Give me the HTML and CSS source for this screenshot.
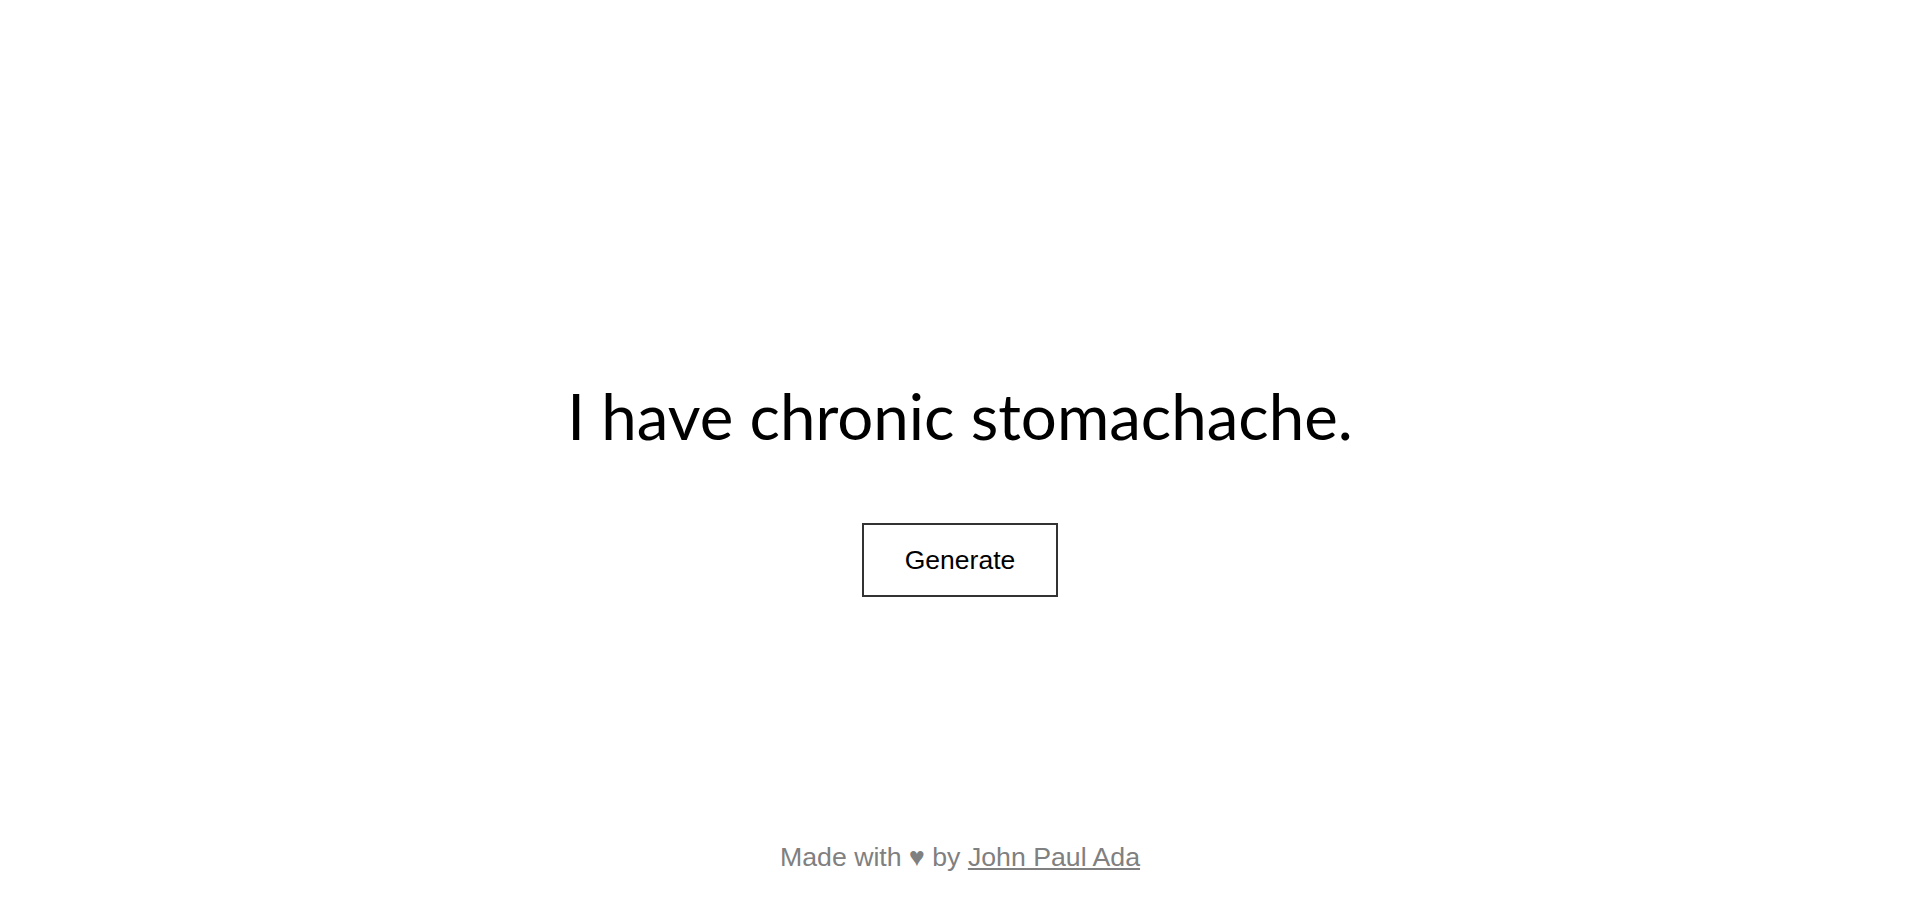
FILE: index.html
```html
<!DOCTYPE html>
<html lang="en">
<head>
<meta charset="utf-8">
<title>Excuse Generator</title>
<link rel="stylesheet" href="styles.css">
</head>
<body>
<main class="main">
  <h1 class="excuse">I have chronic stomachache.</h1>
  <button class="generate" type="button">Generate</button>
</main>
<footer class="footer">Made with ♥ by <a class="author" href="#">John Paul Ada</a></footer>
</body>
</html>
```
FILE: styles.css
```css
html, body {
  margin: 0;
  padding: 0;
  background: #fff;
}
body {
  display: flex;
  flex-direction: column;
  min-height: 100vh;
  font-family: "Liberation Sans", Arial, sans-serif;
}
.main {
  flex: 1;
  display: flex;
  flex-direction: column;
  align-items: center;
  padding-top: 378px;
}
.excuse {
  margin: 0 0 69px 0;
  font-family: Lato, "Open Sans", sans-serif;
  font-weight: 400;
  font-size: 63.6px;
  line-height: 1.2;
  color: #000;
  white-space: nowrap;
}
.generate {
  font-family: "Liberation Sans", Arial, sans-serif;
  font-size: 26.5px;
  line-height: 30px;
  color: #000;
  background: #fff;
  border: 2px solid #333;
  border-radius: 0;
  padding: 20px 41px;
  margin: 0;
  cursor: pointer;
}
.footer {
  text-align: center;
  font-size: 26.7px;
  line-height: 30px;
  color: #808080;
  padding-bottom: 40px;
}
.author {
  color: #808080;
  text-decoration: underline;
}
```
